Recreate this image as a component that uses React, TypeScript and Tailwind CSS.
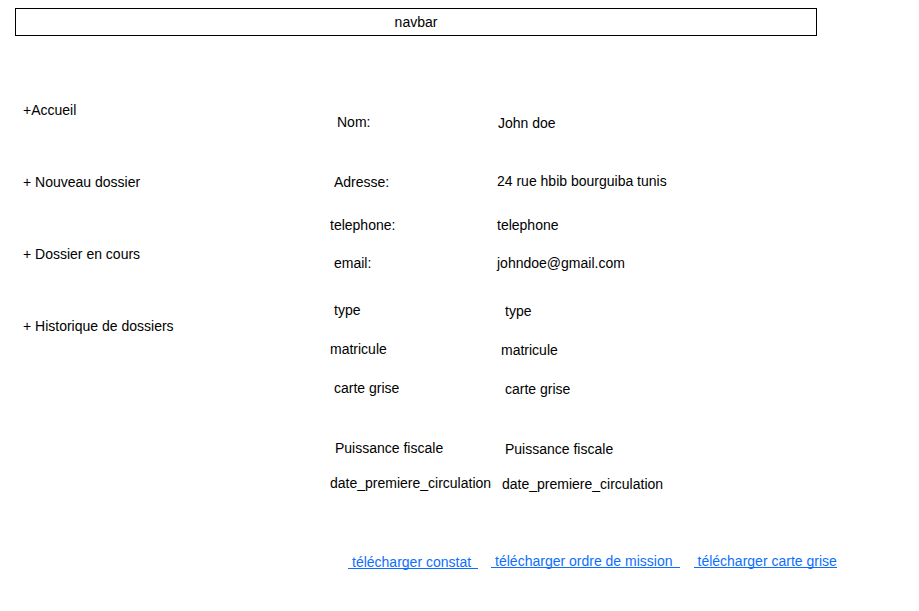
const menu = ["+Accueil", "+ Nouveau dossier", "+ Dossier en cours", "+ Historique de dossiers"]

const rows = [
  { label: "Nom:", value: "John doe", row: "mt-0", l: "ml-[7px]", v: "ml-[1px] mt-px" },
  { label: "Adresse:", value: "24 rue hbib bourguiba tunis", row: "mt-[42px]", l: "ml-[4px] mt-px", v: "ml-0" },
  { label: "telephone:", value: "telephone", row: "mt-[27px]", l: "ml-0", v: "ml-0" },
  { label: "email:", value: "johndoe@gmail.com", row: "mt-[22px]", l: "ml-[4px]", v: "ml-0" },
  { label: "type", value: "type", row: "mt-[31px]", l: "ml-[4px]", v: "ml-[8px] mt-px" },
  { label: "matricule", value: "matricule", row: "mt-[22px]", l: "ml-0", v: "ml-[4px] mt-px" },
  { label: "carte grise", value: "carte grise", row: "mt-[22px]", l: "ml-[4px]", v: "ml-[8px] mt-px" },
  { label: "Puissance fiscale", value: "Puissance fiscale", row: "mt-[43px]", l: "ml-[5px]", v: "ml-[8px] mt-px" },
  { label: "date_premiere_circulation", value: "date_premiere_circulation", row: "mt-[18px]", l: "ml-0", v: "ml-[5px] mt-px" },
]

const links = [
  { text: "télécharger constat", cls: "ml-[18px] mt-px pr-[7px]" },
  { text: "télécharger ordre de mission", cls: "ml-[13px] pr-[7px]" },
  { text: "télécharger carte grise", cls: "ml-[14px] pr-0" },
]

function Navbar() {
  return (
    <div className="ml-[15px] mt-[8px] flex h-[28px] w-[802px] items-center justify-center border border-black">
      navbar
    </div>
  )
}

function Sidebar() {
  return (
    <div className="flex w-[330px] shrink-0 flex-col gap-[56px] pl-[23px] pt-[66px]">
      {menu.map((item) => (
        <div key={item} className="whitespace-nowrap">
          {item}
        </div>
      ))}
    </div>
  )
}

function Details() {
  return (
    <div className="flex flex-col pt-[78px]">
      {rows.map((r) => (
        <div key={r.label} className={`flex items-start ${r.row}`}>
          <div className="w-[167px] shrink-0">
            <div className={`whitespace-nowrap ${r.l}`}>{r.label}</div>
          </div>
          <div className={`whitespace-nowrap ${r.v}`}>{r.value}</div>
        </div>
      ))}
      <div className="mt-[63px] flex items-start">
        {links.map((link) => (
          <a
            key={link.text}
            href="#"
            className={`inline-block whitespace-nowrap border-b border-[#0d6efd] pl-[4px] leading-[12px] text-[#0d6efd] ${link.cls}`}
          >
            {link.text}
          </a>
        ))}
      </div>
    </div>
  )
}

export default function App() {
  return (
    <div className="h-[611px] w-[919px] bg-white font-['Liberation_Sans',Arial,sans-serif] text-[14px] leading-4 text-black">
      <Navbar />
      <div className="flex">
        <Sidebar />
        <Details />
      </div>
    </div>
  )
}
